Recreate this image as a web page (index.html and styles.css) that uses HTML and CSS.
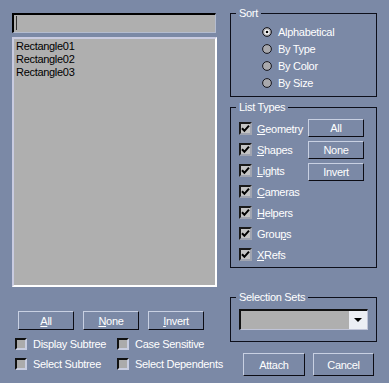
FILE: index.html
```html
<!DOCTYPE html>
<html lang="en">
<head>
    <meta charset="UTF-8">
    <title>Select Objects</title>
    <link rel="stylesheet" href="styles.css">
</head>
<body>
    <div class="dialog">
        <div class="left">
            <div class="search"><span class="caret"></span></div>
            <div class="list">
                <div>Rectangle01</div>
                <div>Rectangle02</div>
                <div>Rectangle03</div>
            </div>
            <div class="btn-row">
                <button class="btn"><u>A</u>ll</button>
                <button class="btn"><u>N</u>one</button>
                <button class="btn"><u>I</u>nvert</button>
            </div>
            <div class="options">
                <label class="check"><span class="box"></span>Display Subtree</label>
                <label class="check"><span class="box"></span>Case Sensitive</label>
                <label class="check"><span class="box"></span>Select Subtree</label>
                <label class="check"><span class="box"></span>Select Dependents</label>
            </div>
        </div>

        <div class="right">
            <fieldset class="group">
                <legend>Sort</legend>
                <div class="radios">
                    <div class="radio">
                        <svg width="10" height="10" viewBox="0 0 10 10"><circle cx="5" cy="5" r="4.4" fill="#a9a9ad" stroke="#15151c"/><circle cx="5" cy="5" r="2.6" fill="#fff"/><circle cx="5" cy="5" r="1.3" fill="#000"/></svg>
                        Alphabetical
                    </div>
                    <div class="radio">
                        <svg width="10" height="10" viewBox="0 0 10 10"><circle cx="5" cy="5" r="4.4" fill="#a9a9ad" stroke="#15151c"/></svg>
                        By Type
                    </div>
                    <div class="radio">
                        <svg width="10" height="10" viewBox="0 0 10 10"><circle cx="5" cy="5" r="4.4" fill="#a9a9ad" stroke="#15151c"/></svg>
                        By Color
                    </div>
                    <div class="radio">
                        <svg width="10" height="10" viewBox="0 0 10 10"><circle cx="5" cy="5" r="4.4" fill="#a9a9ad" stroke="#15151c"/></svg>
                        By Size
                    </div>
                </div>
            </fieldset>

            <fieldset class="group types-group">
                <legend>List Types</legend>
                <div class="types">
                    <div class="type-list">
                        <label class="check row"><span class="box on"><svg width="9" height="9" viewBox="0 0 9 9"><path d="M1 4.2 L3.4 6.8 L8 1.6" fill="none" stroke="#000" stroke-width="2"/></svg></span><span><u>G</u>eometry</span></label>
                        <label class="check row"><span class="box on"><svg width="9" height="9" viewBox="0 0 9 9"><path d="M1 4.2 L3.4 6.8 L8 1.6" fill="none" stroke="#000" stroke-width="2"/></svg></span><span><u>S</u>hapes</span></label>
                        <label class="check row"><span class="box on"><svg width="9" height="9" viewBox="0 0 9 9"><path d="M1 4.2 L3.4 6.8 L8 1.6" fill="none" stroke="#000" stroke-width="2"/></svg></span><span><u>L</u>ights</span></label>
                        <label class="check row"><span class="box on"><svg width="9" height="9" viewBox="0 0 9 9"><path d="M1 4.2 L3.4 6.8 L8 1.6" fill="none" stroke="#000" stroke-width="2"/></svg></span><span><u>C</u>ameras</span></label>
                        <label class="check row"><span class="box on"><svg width="9" height="9" viewBox="0 0 9 9"><path d="M1 4.2 L3.4 6.8 L8 1.6" fill="none" stroke="#000" stroke-width="2"/></svg></span><span><u>H</u>elpers</span></label>
                        <label class="check row"><span class="box on"><svg width="9" height="9" viewBox="0 0 9 9"><path d="M1 4.2 L3.4 6.8 L8 1.6" fill="none" stroke="#000" stroke-width="2"/></svg></span><span>Grou<u>p</u>s</span></label>
                        <label class="check row"><span class="box on"><svg width="9" height="9" viewBox="0 0 9 9"><path d="M1 4.2 L3.4 6.8 L8 1.6" fill="none" stroke="#000" stroke-width="2"/></svg></span><span><u>X</u>Refs</span></label>
                    </div>
                    <div class="type-btns">
                        <button class="btn small">All</button>
                        <button class="btn small">None</button>
                        <button class="btn small">Invert</button>
                    </div>
                </div>
            </fieldset>

            <fieldset class="group sets-group">
                <legend>Selection Sets</legend>
                <div class="sets">
                    <div class="combo">
                        <span class="combo-btn"><span class="arrow"></span></span>
                    </div>
                </div>
            </fieldset>

            <div class="actions">
                <button class="btn attach">Attach</button>
                <button class="btn cancel">Cancel</button>
            </div>
        </div>
    </div>
</body>
</html>
```

FILE: styles.css
```css
body {
    margin: 0;
    background-color: #7b89a6;
    font-family: "Liberation Sans", Arial, sans-serif;
    font-size: 11px;
    letter-spacing: -0.3px;
    color: #fff;
}
.dialog {
    display: flex;
    gap: 13px;
    padding: 7px 0 0 12px;
    width: 389px;
    height: 383px;
    box-sizing: border-box;
}
.left {
    width: 205px;
    margin-top: 6px;
    display: flex;
    flex-direction: column;
}
.search {
    width: 204px;
    height: 20px;
    box-sizing: border-box;
    background-color: #afafaf;
    border-top: 2px solid #000;
    border-left: 2px solid #000;
    border-right: 1px solid #b4bccf;
    border-bottom: 1px solid #b4bccf;
}
.caret {
    display: block;
    width: 1px;
    height: 14px;
    margin: 1px 0 0 2px;
    background-color: #333;
}
.list {
    margin-top: 4px;
    width: 205px;
    height: 250px;
    box-sizing: border-box;
    background-color: #afafaf;
    border: 2px solid;
    border-color: #c9cbe0 #fff #fff #c9cbe0;
    padding: 1px 0 0 2px;
    color: #000;
    line-height: 13px;
}
.btn {
    font-family: inherit;
    font-size: 11px;
    letter-spacing: -0.3px;
    color: #fff;
    background-color: #7b89a6;
    border: 1px solid;
    border-color: #c8d0e2 #0c0c14 #0c0c14 #c8d0e2;
    padding: 0;
    box-sizing: border-box;
    cursor: pointer;
}
.btn-row {
    display: flex;
    gap: 9px;
    margin-top: 24px;
    padding-left: 6px;
}
.btn-row .btn {
    width: 56px;
    height: 19px;
}
.options {
    display: grid;
    grid-template-columns: 102px auto;
    margin-top: 4px;
    padding-left: 3px;
}
.check {
    display: flex;
    align-items: center;
    gap: 6px;
    height: 20px;
    white-space: nowrap;
}
.box {
    width: 12px;
    height: 12px;
    box-sizing: border-box;
    background-color: #ababab;
    border: 2px solid;
    border-color: #111 #c8cde0 #c8cde0 #111;
}
.box.on {
    width: 13px;
    height: 13px;
    display: flex;
    align-items: center;
    justify-content: center;
    background-color: #c4c4c4;
    border-color: #1a1a1a #a0a4b0 #a0a4b0 #1a1a1a;
}
.right {
    width: 147px;
    display: flex;
    flex-direction: column;
}
.group {
    margin: 0;
    padding: 0;
    min-width: 0;
    border: 1px solid #0d0f1a;
}
.group legend {
    margin-left: 5px;
    padding: 0 3px;
    line-height: 13px;
}
.radios {
    padding: 3px 0 5px 31px;
}
.radio {
    display: flex;
    align-items: center;
    gap: 6px;
    height: 17px;
}
.types-group {
    margin-top: 4px;
}
.types {
    display: flex;
    justify-content: space-between;
    padding: 4px 12px 2px 8px;
}
.check.row {
    height: 21px;
    gap: 5px;
}
.type-btns {
    display: flex;
    flex-direction: column;
    gap: 4px;
    padding-top: 1px;
}
.btn.small {
    width: 56px;
    height: 18px;
}
.sets-group {
    margin-top: 23px;
}
.sets {
    padding: 5px 8px 11px 8px;
}
.combo {
    height: 21px;
    box-sizing: border-box;
    display: flex;
    justify-content: flex-end;
    background-color: #afafaf;
    border-top: 2px solid #111;
    border-left: 2px solid #111;
    border-right: 1px solid #c0c4d8;
    border-bottom: 1px solid #c0c4d8;
}
.combo-btn {
    width: 18px;
    display: flex;
    align-items: center;
    justify-content: center;
    background-color: #eceef4;
}
.arrow {
    width: 0;
    height: 0;
    border-left: 4px solid transparent;
    border-right: 4px solid transparent;
    border-top: 4px solid #000;
}
.actions {
    display: flex;
    gap: 8px;
    margin-top: 11px;
    padding-left: 13px;
}
.actions .btn {
    height: 23px;
}
.attach {
    width: 62px;
}
.cancel {
    width: 61px;
}
```
